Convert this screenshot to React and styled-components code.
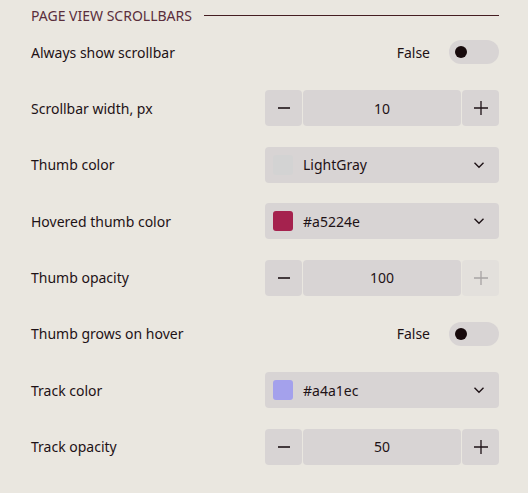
import styled, { createGlobalStyle } from "styled-components";

const GlobalStyle = createGlobalStyle`
  html, body {
    margin: 0;
    padding: 0;
    background: #eae7e0;
  }
  body {
    font-family: "Noto Sans", "Open Sans", sans-serif;
    color: #1e1216;
  }
`;

const settings = [
  { label: "Always show scrollbar", type: "toggle", value: "False" },
  { label: "Scrollbar width, px", type: "number", value: "10" },
  { label: "Thumb color", type: "color", value: "LightGray", swatch: "#d3d3d3" },
  { label: "Hovered thumb color", type: "color", value: "#a5224e", swatch: "#a5224e" },
  { label: "Thumb opacity", type: "number", value: "100", maxed: true },
  { label: "Thumb grows on hover", type: "toggle", value: "False" },
  { label: "Track color", type: "color", value: "#a4a1ec", swatch: "#a4a1ec" },
  { label: "Track opacity", type: "number", value: "50" },
];

function MinusIcon() {
  return (
    <svg width="14" height="14" viewBox="0 0 14 14">
      <path d="M1 7h12" stroke="currentColor" strokeWidth="1.6" />
    </svg>
  );
}

function PlusIcon() {
  return (
    <svg width="16" height="16" viewBox="0 0 16 16">
      <path d="M1 8h14M8 1v14" stroke="currentColor" strokeWidth="1.3" />
    </svg>
  );
}

function ChevronIcon() {
  return (
    <svg width="12" height="8" viewBox="0 0 12 8">
      <path d="M1.5 1.8l4.5 4.4 4.5-4.4" fill="none" stroke="currentColor" strokeWidth="1.4" />
    </svg>
  );
}

function Control({ item }) {
  if (item.type === "toggle") {
    return (
      <StToggleWrap>
        <span>{item.value}</span>
        <StToggle>
          <StKnob />
        </StToggle>
      </StToggleWrap>
    );
  }
  if (item.type === "number") {
    return (
      <StNumber>
        <StStepButton>
          <MinusIcon />
        </StStepButton>
        <StNumberValue>{item.value}</StNumberValue>
        <StStepButton $disabled={item.maxed}>
          <PlusIcon />
        </StStepButton>
      </StNumber>
    );
  }
  return (
    <StSelect>
      <StSwatch $color={item.swatch} />
      <StSelectText>{item.value}</StSelectText>
      <ChevronIcon />
    </StSelect>
  );
}

function App() {
  return (
    <>
      <GlobalStyle />
      <StPanel>
        <StHeader>
          <h3>Page view scrollbars</h3>
          <StHeaderLine />
        </StHeader>
        <StList>
          {settings.map((item) => (
            <StRow key={item.label}>
              <StLabel>{item.label}</StLabel>
              <Control item={item} />
            </StRow>
          ))}
        </StList>
      </StPanel>
    </>
  );
}

export default App;

const StPanel = styled.div`
  padding: 5px 29px 0 31px;
`;

const StHeader = styled.div`
  display: flex;
  align-items: center;
  gap: 12px;
  height: 20px;

  & h3 {
    margin: 0;
    font-size: 14px;
    font-weight: 400;
    text-transform: uppercase;
    color: #5a2e3c;
  }
`;

const StHeaderLine = styled.div`
  flex: 1;
  height: 1px;
  background: #451e22;
`;

const StList = styled.div`
  display: flex;
  flex-direction: column;
  gap: 20.4px;
  margin-top: 9px;
`;

const StRow = styled.div`
  display: grid;
  grid-template-columns: 1fr 234px;
  align-items: center;
  height: 36px;
`;

const StLabel = styled.span`
  font-size: 14px;
`;

const StToggleWrap = styled.div`
  display: flex;
  justify-content: flex-end;
  align-items: center;
  gap: 19px;
  font-size: 14px;
`;

const StToggle = styled.div`
  display: flex;
  align-items: center;
  width: 50px;
  height: 24px;
  border-radius: 12px;
  background: #d8d4d4;
  padding-left: 6px;
  box-sizing: border-box;
`;

const StKnob = styled.div`
  width: 12px;
  height: 12px;
  border-radius: 50%;
  background: #170a0c;
`;

const StNumber = styled.div`
  display: flex;
  gap: 1px;
  height: 36px;
`;

const StStepButton = styled.div`
  display: flex;
  justify-content: center;
  align-items: center;
  width: 37px;
  border-radius: 4px;
  background: ${({ $disabled }) => ($disabled ? "#e3e0dc" : "#d8d4d4")};
  color: ${({ $disabled }) => ($disabled ? "#a8a4a4" : "#1e1216")};
`;

const StNumberValue = styled.div`
  flex: 1;
  display: flex;
  justify-content: center;
  align-items: center;
  border-radius: 4px;
  background: #d8d4d4;
  font-size: 14px;
`;

const StSelect = styled.div`
  display: flex;
  align-items: center;
  height: 36px;
  padding: 0 14px 0 8px;
  border-radius: 4px;
  background: #d8d4d4;
  box-sizing: border-box;
`;

const StSwatch = styled.div`
  width: 20px;
  height: 20px;
  border-radius: 3px;
  background: ${({ $color }) => $color};
`;

const StSelectText = styled.span`
  flex: 1;
  margin-left: 10px;
  font-size: 14px;
`;
